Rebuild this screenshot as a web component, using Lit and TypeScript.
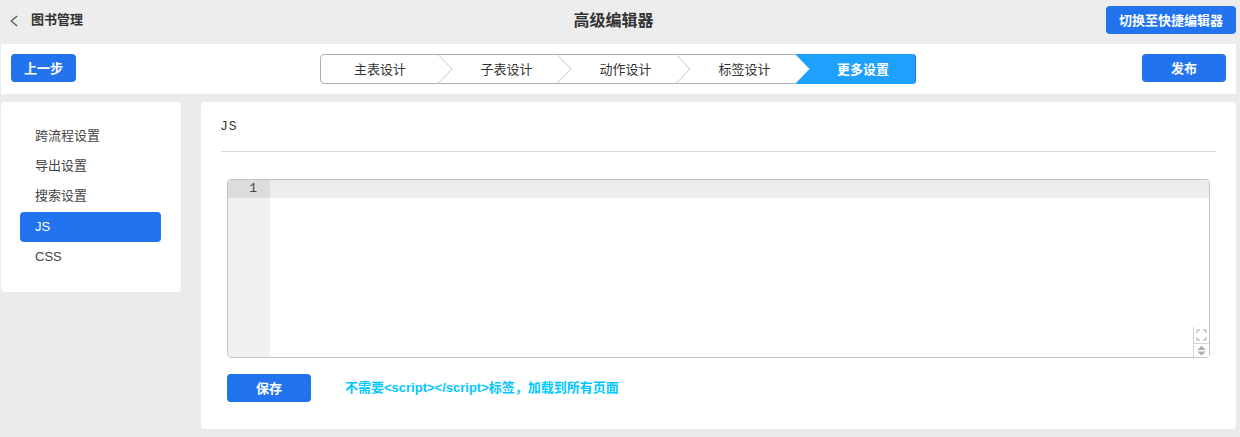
import { LitElement, html, css, svg } from "lit";
import { customElement } from "lit/decorators.js";

const FONT = css`"Liberation Sans", "Noto Sans CJK SC", sans-serif`;

@customElement("app-root")
export class AppRoot extends LitElement {
  static styles = css`
    :host { display: block; width: 1240px; height: 437px; background: #ebebeb; font-family: ${FONT}; color: #333; overflow: hidden; font-size: 13px; }
    * { box-sizing: border-box; }
    .btn { border: 0; padding: 0 0 2px; background: #2174ee; color: #fff; border-radius: 4px; font: 700 13px ${FONT}; display: flex; align-items: center; justify-content: center; }
    .top { height: 44px; display: grid; grid-template-columns: 1fr auto 1fr; align-items: center; padding: 0 4px 4px 10px; background: #ededed; }
    .crumb { display: flex; align-items: center; gap: 11px; font-weight: 700; font-size: 13px; color: #333; padding-bottom: 3px; }
    .crumb svg { display: block; margin-top: 4px; }
    .title { font-size: 16px; font-weight: 700; color: #333; margin-right: 19px; padding-bottom: 2px; }
    .switch { justify-self: end; width: 130px; height: 28px; }
    .bar { margin-left: 1px; width: 1235px; height: 50px; background: #fff; display: grid; grid-template-columns: 309px 596px 1fr; align-items: center; padding: 0 10px; }
    .prev { width: 65px; height: 28px; margin-bottom: 2px; }
    .pub { justify-self: end; width: 84px; height: 28px; margin-bottom: 2px; }
    .steps { display: grid; grid-template-columns: 118px 119px 119px 119px 119px; height: 30px; border: 1px solid #adadbd; border-radius: 4px; }
    .step { position: relative; display: flex; align-items: center; justify-content: center; font-size: 13px; color: #333; padding: 0 0 2px 16px; }
    .step:first-child { padding-left: 0; }
    .step.on { background: #1ea0ff; color: #fff; font-weight: 700; padding-left: 16px; margin: -1px -1px -1px -1px; border-radius: 0 4px 4px 0; border-right: 1px solid #2174ee; }
    .chev { position: absolute; top: -1px; right: -14px; z-index: 1; display: block; }
    .body { display: grid; grid-template-columns: 180px 1035px; gap: 20px; margin: 8px 0 0 1px; align-items: start; }
    .side { height: 190px; background: #fff; border-radius: 4px; padding: 20px 20px 0 19px; }
    .item { height: 30px; line-height: 30px; padding-left: 15px; font-size: 13px; color: #444; border-radius: 4px; }
    .item.cjk { line-height: 28px; }
    .item.on { background: #2174ee; color: #fff; }
    .main { height: 327px; background: #fff; border-radius: 4px; padding: 0 20px 0 20px; }
    .h { height: 50px; border-bottom: 1px solid #d9d9d9; font: 13px/50px "Liberation Mono", monospace; letter-spacing: 1px; text-indent: -1px; color: #333; }
    .editor { position: relative; margin: 27px 6px 0 6px; height: 179px; border: 1px solid #c4c4c4; border-radius: 4px; display: grid; grid-template-columns: 42px 1fr; overflow: hidden; background: #fff; }
    .gutter { background: #f0f0f0; }
    .num { height: 18px; background: #dcdcdc; text-align: right; padding-right: 13px; font: 13px/18px "Liberation Mono", monospace; color: #444; }
    .active { height: 18px; background: #ececec; }
    .ctrl { position: absolute; right: 0; bottom: 0; width: 16px; border-left: 1px solid #d4d4d4; background: #fff; display: flex; flex-direction: column; }
    .ctrl svg { display: block; }
    .sep { border-top: 1px solid #d4d4d4; }
    .foot { display: flex; align-items: center; margin: 16px 0 0 6px; }
    .save { width: 84px; height: 28px; }
    .tip { margin-left: 34px; color: #00c8ff; font-weight: 700; font-size: 13px; padding-bottom: 4px; }
  `;

  render() {
    const steps = ["主表设计", "子表设计", "动作设计", "标签设计"];
    return html`
      <div class="top">
        <div class="crumb">
          <svg width="10" height="14" viewBox="0 0 10 14"><path d="M7.200 2 L1.200 7 L7.200 12" fill="none" stroke="#555" stroke-width="1.2"/></svg>
          <span>图书管理</span>
        </div>
        <div class="title">高级编辑器</div>
        <button class="btn switch">切换至快捷编辑器</button>
      </div>
      <div class="bar">
        <button class="btn prev">上一步</button>
        <div class="steps">
          ${steps.map(
            (s, i) => html`<div class="step">${s}
              <svg class="chev" width="15" height="30" viewBox="0 0 15 30">
                ${i === 3
                  ? svg`<path d="M0 0 L14.500 15 L0 30 Z" fill="#fff"/><path d="M0 0.500H1M0 29.500H1" stroke="#adadbd"/>`
                  : svg`<path d="M0 0.500 L14 15 L0 29.500" fill="#fff" stroke="#c5c5d2" stroke-width="1"/>`}
              </svg>
            </div>`
          )}
          <div class="step on">更多设置</div>
        </div>
        <button class="btn pub">发布</button>
      </div>
      <div class="body">
        <div class="side">
          <div class="item cjk">跨流程设置</div>
          <div class="item cjk">导出设置</div>
          <div class="item cjk">搜索设置</div>
          <div class="item on">JS</div>
          <div class="item">CSS</div>
        </div>
        <div class="main">
          <div class="h">JS</div>
          <div class="editor">
            <div class="gutter"><div class="num">1</div></div>
            <div><div class="active"></div></div>
            <div class="ctrl">
              <svg width="15" height="16" viewBox="0 0 15 16"><path d="M3 6V3H6M9 3H12V6M12 10V13H9M6 13H3V10" fill="none" stroke="#aaa" stroke-width="1"/></svg>
              <svg class="sep" width="15" height="14" viewBox="0 0 15 14"><path d="M7.500 2L12 6.500H3Z M3 8H12L7.500 12.500Z" fill="#aaa"/></svg>
            </div>
          </div>
          <div class="foot">
            <button class="btn save">保存</button>
            <span class="tip">不需要&lt;script&gt;&lt;/script&gt;标签，加载到所有页面</span>
          </div>
        </div>
      </div>
    `;
  }
}
